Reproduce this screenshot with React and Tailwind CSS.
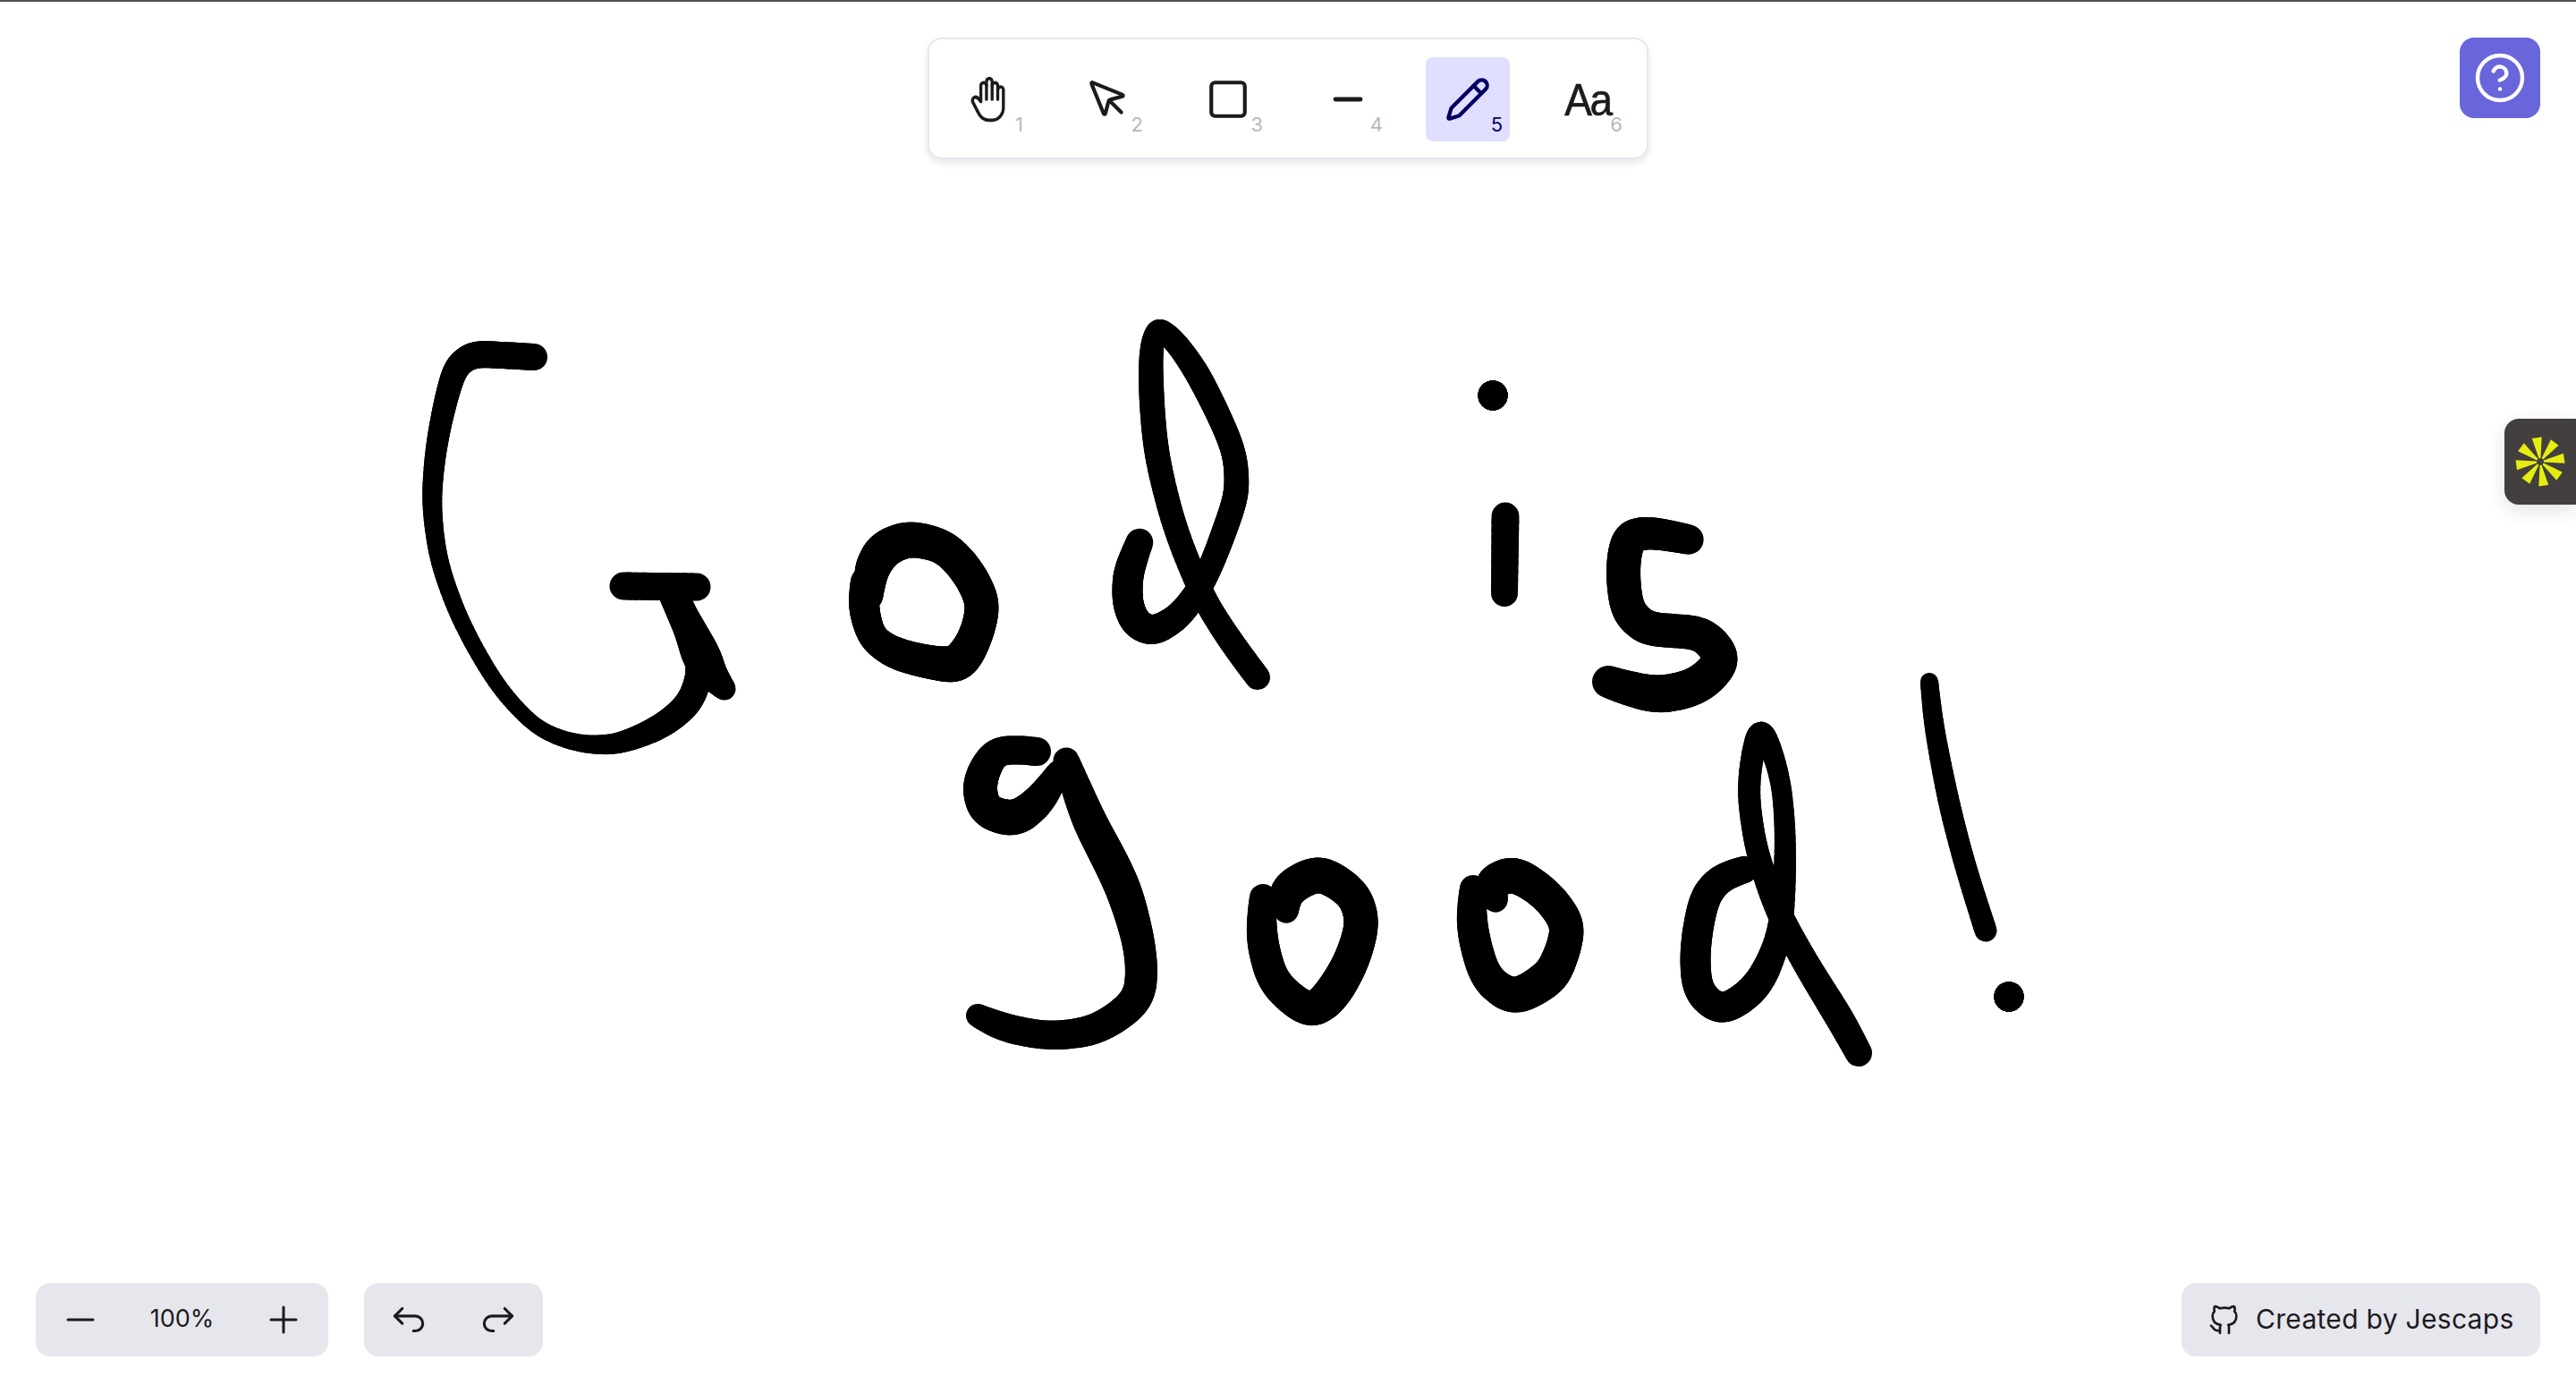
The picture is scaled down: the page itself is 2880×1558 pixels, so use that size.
import React from 'react';
import { MousePointer, Square, Minus, Pencil, Plus, CircleHelp } from 'lucide-react';
import { TbHandStop, TbArrowBackUp, TbArrowForwardUp, TbBrandGithub } from 'react-icons/tb';

// freehand strokes of the canvas: [x, y, width]
const strokes = [
  // G
  [[597, 399, 30], [560, 397, 30], [530, 397, 30], [510, 412, 28], [498, 450, 26], [488, 500, 24], [483, 560, 22], [491, 626, 20], [516, 695, 19], [556, 765, 18], [600, 812, 17], [645, 830, 19], [690, 831, 23], [738, 812, 28], [770, 785, 30], [782, 750, 30], [776, 715, 32], [762, 680, 30], [750, 660, 28]],
  [[752, 665, 30], [772, 705, 36], [785, 735, 44], [797, 755, 34], [810, 770, 25]],
  [[697, 655, 31], [779, 656, 31]],
  // o
  [[974, 668, 24], [974, 640, 38], [988, 615, 42], [1017, 603, 40], [1055, 612, 38], [1082, 640, 38], [1098, 675, 38], [1090, 712, 38], [1072, 740, 42], [1046, 741, 38], [1004, 731, 36], [976, 712, 32], [966, 678, 34], [968, 650, 34]],
  // d
  [[1274, 606, 30], [1262, 640, 34], [1261, 672, 34], [1270, 695, 34], [1290, 704, 33], [1320, 686, 30], [1348, 645, 27], [1370, 590, 28], [1382, 550, 28], [1380, 510, 27], [1366, 472, 27], [1340, 420, 28], [1316, 385, 26], [1296, 368, 24], [1288, 388, 26], [1287, 430, 28], [1293, 505, 28], [1314, 590, 27], [1346, 668, 27], [1378, 719, 28], [1406, 757, 28]],
  // i
  [[1669, 442, 33], [1669, 442, 33]],
  [[1683, 577, 31], [1682, 663, 30]],
  // s
  [[1888, 603, 33], [1847, 596, 36], [1822, 602, 38], [1815, 635, 38], [1820, 680, 38], [1845, 703, 38], [1900, 708, 38], [1924, 737, 40], [1897, 766, 42], [1850, 776, 42], [1798, 762, 36]],
  // g
  [[1159, 840, 32], [1115, 840, 32], [1096, 875, 38], [1103, 905, 38], [1135, 914, 40], [1163, 893, 36], [1183, 863, 26]],
  [[1192, 850, 28], [1216, 913, 38], [1240, 960, 40], [1258, 1000, 40], [1274, 1060, 36], [1272, 1115, 36], [1225, 1150, 34], [1171, 1157, 32], [1123, 1148, 32], [1093, 1135, 26]],
  // o
  [[1438, 1018, 26], [1440, 995, 40], [1475, 977, 40], [1512, 1000, 38], [1522, 1033, 38], [1510, 1075, 40], [1488, 1112, 42], [1463, 1128, 38], [1425, 1097, 36], [1411, 1047, 35], [1412, 1003, 30]],
  // o
  [[1672, 1006, 26], [1668, 988, 38], [1693, 978, 40], [1728, 1000, 38], [1752, 1035, 38], [1742, 1075, 40], [1728, 1095, 42], [1693, 1113, 40], [1661, 1090, 36], [1646, 1035, 35], [1647, 993, 30]],
  // d
  [[1950, 972, 30], [1925, 982, 32], [1906, 1005, 34], [1896, 1057, 34], [1899, 1105, 34], [1926, 1127, 34], [1965, 1100, 34], [1990, 1040, 28], [1996, 947, 24], [1990, 870, 22], [1968, 815, 26], [1955, 880, 25], [1965, 953, 25], [1989, 1020, 28], [2021, 1080, 30], [2056, 1137, 32], [2078, 1177, 30]],
  // !
  [[2157, 762, 20], [2163, 815, 22], [2179, 897, 24], [2198, 970, 24], [2220, 1040, 25]],
  [[2246, 1114, 33], [2246, 1114, 33]],
];

// catmull-rom through the points, width eased along the way, then a light moving average
const sample = (pts) => {
  const out = [];
  for (let i = 0; i < pts.length - 1; i++) {
    const p0 = pts[i - 1] || pts[i];
    const p1 = pts[i];
    const p2 = pts[i + 1];
    const p3 = pts[i + 2] || p2;
    for (let s = 0; s <= 10; s++) {
      const t = s / 10;
      const c = (k) =>
        0.5 * (2 * p1[k] + (p2[k] - p0[k]) * t + (2 * p0[k] - 5 * p1[k] + 4 * p2[k] - p3[k]) * t * t + (3 * p1[k] - p0[k] - 3 * p2[k] + p3[k]) * t * t * t);
      out.push([c(0), c(1), p1[2] + (p2[2] - p1[2]) * t]);
    }
  }
  return out.map((p, i) => {
    const r = Math.min(4, i, out.length - 1 - i);
    const win = out.slice(i - r, i + r + 1);
    return [0, 1, 2].map((k) => win.reduce((sum, q) => sum + q[k], 0) / win.length);
  });
};

const Drawing = () => (
  <svg className="absolute inset-0" width="2880" height="1558" viewBox="0 0 2880 1558" fill="none">
    {strokes.map((pts, i) => {
      const line = sample(pts);
      return (
        <g key={i} stroke="#000" strokeLinecap="round">
          {line.slice(1).map((p, j) => (
            <line key={j} x1={line[j][0]} y1={line[j][1]} x2={p[0]} y2={p[1]} strokeWidth={p[2]} />
          ))}
        </g>
      );
    })}
  </svg>
);

const Spark = () => (
  <svg width="56" height="56" viewBox="-28 -28 56 56" fill="#e5ee10">
    {[0, 45, 90, 135, 180, 225, 270, 315].map((a) => (
      <polygon key={a} points="-1,-4 1,-4 5.5,-27 -5.5,-27" transform={`rotate(${a - 8})`} />
    ))}
  </svg>
);

const tools = [
  { n: 1, icon: <TbHandStop size={56} strokeWidth={1.6} className="scale-x-90" /> },
  { n: 2, icon: <MousePointer size={50} strokeWidth={2} /> },
  { n: 3, icon: <Square size={50} strokeWidth={2} /> },
  { n: 4, icon: <Minus size={48} strokeWidth={2.4} /> },
  { n: 5, icon: <Pencil size={52} strokeWidth={2} />, active: true },
  { n: 6, icon: <span className="text-[46px] leading-none tracking-[-0.05em] font-['Liberation_Sans',sans-serif] scale-y-110 [-webkit-text-stroke:0.6px_currentColor]">Aa</span> },
];

export default function App() {
  return (
    <div className="relative flex h-[1558px] w-full flex-col justify-between overflow-hidden bg-white text-[#1b1b1f] font-['Inter',sans-serif]">
      <Drawing />

      <div className="relative">
        <div className="h-[2px] bg-[#505050]" />
        <div className="grid grid-cols-[1fr_auto_1fr] px-[40px] pt-[40px]">
          <div />
          <div className="flex gap-[40px] rounded-2xl border-2 border-[#e6e6f2] bg-white px-[19px] pt-[20px] pb-[18px] shadow-[0_4px_8px_rgba(0,0,0,0.1)]">
            {tools.map((t) => (
              <button
                key={t.n}
                className={`relative flex h-[94px] w-[94px] items-center justify-center rounded-lg ${t.active ? 'bg-[#e0dfff] text-[#030064]' : 'text-[#1b1b1f]'}`}
              >
                {t.icon}
                <span className={`absolute bottom-[8px] right-[8px] text-[22px] leading-[22px] ${t.active ? 'text-[#030064]' : 'text-[#b8b8b8]'}`}>{t.n}</span>
              </button>
            ))}
          </div>
          <button className="flex h-[90px] w-[90px] items-center justify-center justify-self-end rounded-2xl bg-[#6965db] text-white">
            <CircleHelp size={60} strokeWidth={1.75} />
          </button>
        </div>
      </div>

      <div className="absolute right-0 top-[468px] flex h-[96px] w-[80px] items-center justify-center rounded-l-2xl bg-[#433f3e] shadow-[0_6px_20px_rgba(0,0,0,0.12)]">
        <Spark />
      </div>

      <div className="relative flex items-center justify-between px-[40px] pb-[42px]">
        <div className="flex gap-[40px]">
          <div className="flex h-[82px] w-[327px] items-center justify-between rounded-2xl bg-[#e6e6ed] px-[26px]">
            <Minus size={48} strokeWidth={1.5} />
            <span className="text-[27px] mb-[2px]">100%</span>
            <Plus size={48} strokeWidth={1.5} />
          </div>
          <div className="flex h-[82px] w-[200px] items-center justify-between rounded-2xl bg-[#e6e6ed] px-[24px]">
            <TbArrowBackUp size={50} strokeWidth={1.5} />
            <TbArrowForwardUp size={50} strokeWidth={1.5} />
          </div>
        </div>
        <div className="flex h-[82px] w-[401px] items-center gap-[15px] rounded-2xl bg-[#e6e6ed] pl-[28px]">
          <TbBrandGithub size={40} strokeWidth={1.6} />
          <span className="text-[30px] tracking-[0.01em] mb-[2px]">Created by Jescaps</span>
        </div>
      </div>
    </div>
  );
}
